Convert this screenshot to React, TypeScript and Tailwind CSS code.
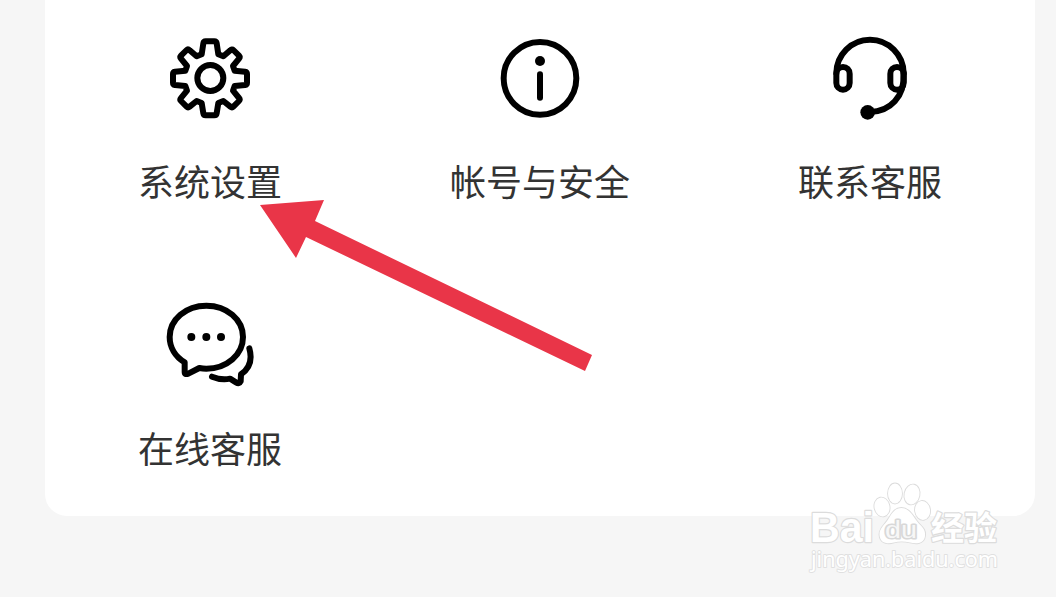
import type { ReactNode } from 'react';

interface MenuItem {
  label: string;
  icon: ReactNode;
}

function Icon({ children }: { children: ReactNode }) {
  return (
    <svg
      className="h-[120px] w-[120px]"
      viewBox="0 0 360 360"
      fill="none"
      stroke="#000"
      strokeWidth={18}
      strokeLinecap="round"
      strokeLinejoin="round"
    >
      {children}
    </svg>
  );
}

const menuItems: MenuItem[] = [
  {
    label: '系统设置',
    icon: (
      <Icon>
        <path d="M155 103L160 70Q161 64 167 64H193Q199 64 200 70L205 103L220 109L241 91Q246 86 250 90L267 107Q271 111 267 116L249 138L254 152L285 155Q291 156 291 162V188Q291 194 285 195L254 198L249 212L267 234Q271 239 267 243L250 260Q246 264 241 260L220 243L205 249L200 280Q199 286 193 286H167Q161 286 160 280L155 249L140 243L119 260Q114 264 110 260L93 243Q89 239 93 234L111 212L106 198L75 195Q69 194 69 188V162Q69 156 75 155L106 152L111 138L93 116Q89 111 93 107L110 90Q114 86 119 91L140 109Z" />
        <circle cx="181" cy="174" r="39" />
      </Icon>
    ),
  },
  {
    label: '帐号与安全',
    icon: (
      <Icon>
        <circle cx="180" cy="175" r="109" />
        <circle cx="180" cy="123" r="15" fill="#000" stroke="none" />
        <path d="M180 163V233" />
      </Icon>
    ),
  },
  {
    label: '联系客服',
    icon: (
      <Icon>
        <path d="M79 160A101 101 0 0 1 281 160" />
        <rect x="79" y="141" width="40" height="68" rx="20" />
        <rect x="241" y="141" width="40" height="68" rx="20" />
        <path d="M281 160C285 230 240 275 180 276" />
        <circle cx="173" cy="277" r="22" fill="#000" stroke="none" />
      </Icon>
    ),
  },
  {
    label: '在线客服',
    icon: (
      <Icon>
        <g transform="translate(0 9)">
          <path d="M104 217C76 200 59 172 59 141C59 88 108 47 169 47C230 47 279 88 279 141C279 194 230 236 169 236Q158 236 148 234L115 251Q104 255 104 246Z" />
          <path d="M298 175C309 214 295 238 273 253L272 274Q268 283 258 277L240 266C220 270 203 267 186 260" />
          <g fill="#000" stroke="none">
            <circle cx="124" cy="141" r="12" />
            <circle cx="169" cy="141" r="12" />
            <circle cx="213" cy="141" r="12" />
          </g>
        </g>
      </Icon>
    ),
  },
];

function Watermark() {
  return (
    <svg
      className="absolute left-[800px] top-[476px] h-[104px] w-[210px]"
      viewBox="800 476 210 104"
      fill="#fff"
      stroke="#dcdcdc"
      strokeWidth={2.4}
      strokeLinejoin="round"
      paintOrder="stroke"
    >
      <text x="810" y="541.5" fontFamily="Liberation Sans, sans-serif" fontSize="43" fontWeight="700" textLength="64" lengthAdjust="spacingAndGlyphs">
        Bai
      </text>
      <g strokeWidth={1.8}>
        <ellipse cx="882" cy="507" rx="7.5" ry="9.5" transform="rotate(-12 882 507)" />
        <ellipse cx="895" cy="493.5" rx="7" ry="10" />
        <ellipse cx="912" cy="494.5" rx="7.5" ry="10" transform="rotate(12 912 494.5)" />
        <ellipse cx="922.5" cy="510.5" rx="7.5" ry="9.5" transform="rotate(-8 922 510)" />
        <path d="M901.5 508C908 508 912 514 916 520C920 526 926 528 925 536C924 544 916 544 910 542.5C904 541 899 541 894 542.5C887 544.500 880 543 879.500 535C879 528 885 525 889 518C892 513 895 508 901.500 508Z" />
      </g>
      <text x="885" y="538" fontFamily="Liberation Sans, sans-serif" fontSize="23" fontWeight="400" textLength="32" lengthAdjust="spacingAndGlyphs" strokeWidth={3} fill="#f7f7f7" stroke="#d8d8d8">
        du
      </text>
      <text x="931" y="539.5" fontFamily="Noto Sans CJK SC, sans-serif" fontSize="33" fontWeight="700" textLength="66" lengthAdjust="spacingAndGlyphs">
        经验
      </text>
      <text x="811" y="567" fontFamily="Noto Sans, sans-serif" fontSize="21" fontWeight="400" textLength="187" lengthAdjust="spacingAndGlyphs" strokeWidth={1.8} stroke="#e0e0e0">
        jingyan.baidu.com
      </text>
    </svg>
  );
}

export default function App() {
  return (
    <div className="relative h-[597px] w-[1056px] overflow-hidden bg-[#f6f6f6] pl-[45px] font-['Noto_Sans_CJK_SC',sans-serif]">
      <div className="grid h-[516px] w-[990px] auto-rows-[267px] grid-cols-3 rounded-b-[22px] bg-white pt-5">
        {menuItems.map((item) => (
          <div key={item.label} className="flex flex-col items-center">
            {item.icon}
            <span className="mt-5 text-[36px] leading-10 text-[#333]">{item.label}</span>
          </div>
        ))}
      </div>

      <svg className="absolute left-0 top-0 h-[597px] w-[1056px]" viewBox="0 0 1056 597">
        <polygon points="260,205 324,200 315,221 592,355 585,371 306,237 296,258" fill="#e93548" />
      </svg>

      <Watermark />
    </div>
  );
}
